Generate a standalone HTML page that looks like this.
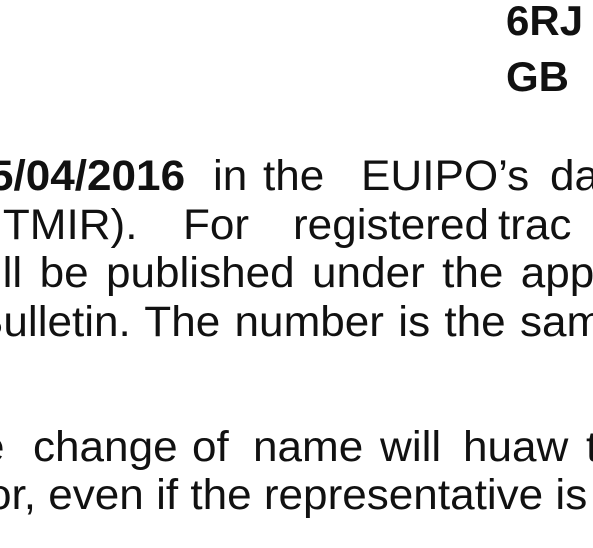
<!DOCTYPE html>
<html><head><meta charset="utf-8"><style>
html,body{margin:0;padding:0;background:#fff;width:593px;height:548px;overflow:hidden;position:relative}
span{position:absolute;font-family:"Liberation Sans",sans-serif;font-size:43px;line-height:43px;color:#111;white-space:nowrap;transform:scaleX(1.025);transform-origin:0 0}
.b{font-weight:bold}
</style></head><body>
<span class="b" style="left:506px;top:-1px;font-size:42px;transform:none">6RJ</span>
<span class="b" style="left:506px;top:55px;font-size:42px;transform:none">GB</span>

<span class="b" style="left:-11px;top:155px">5/04/2016</span>
<span style="left:213px;top:155px">in</span>
<span style="left:263px;top:155px">the</span>
<span style="left:361px;top:155px">EUIPO’s</span>
<span style="left:550px;top:155px">da</span>

<span style="left:-29px;top:204px">UTMIR).</span>
<span style="left:183px;top:204px">For</span>
<span style="left:293px;top:204px">registered</span>
<span style="left:498px;top:204px">trac</span>

<span style="left:-39px;top:252px;word-spacing:5px">will be published under the app</span>
<span style="left:-26px;top:301px;word-spacing:2px">Bulletin. The number is the sam</span>

<span style="left:-20px;top:426px">e</span>
<span style="left:33px;top:426px">change</span>
<span style="left:192px;top:426px">of</span>
<span style="left:253px;top:426px">name</span>
<span style="left:380px;top:426px">will</span>
<span style="left:463px;top:426px">huaw</span>
<span style="left:586px;top:426px">t</span>

<span style="left:-13px;top:474px">or, even if the representative is</span>
</body></html>
